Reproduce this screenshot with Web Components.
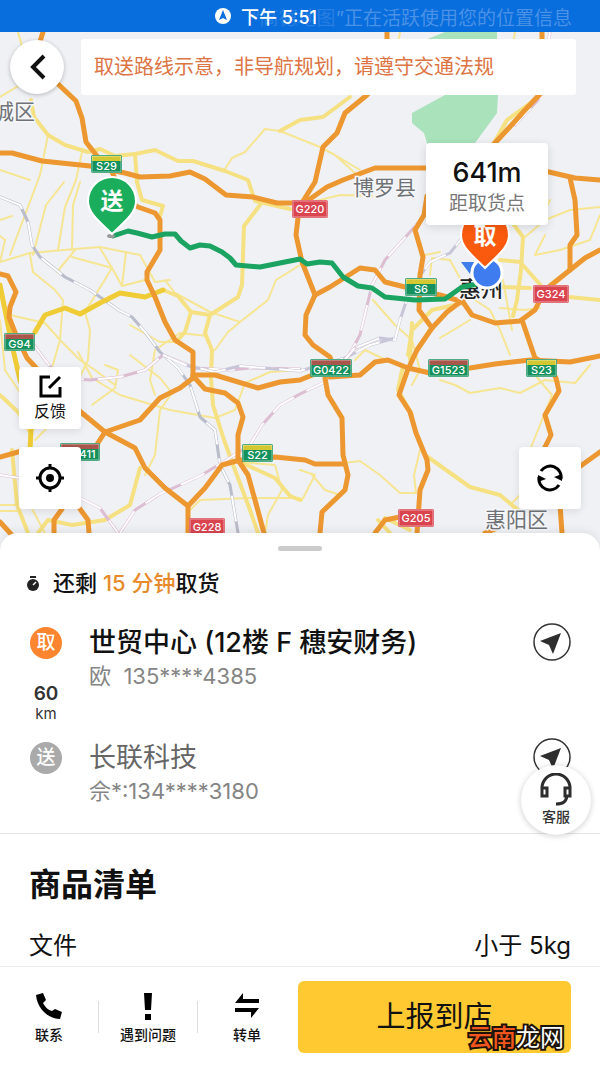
<!DOCTYPE html>
<html lang="zh-CN">
<head>
<meta charset="UTF-8">
<meta name="viewport" content="width=device-width, initial-scale=1">
<title>配送任务</title>
<style>
  html, body { margin: 0; }
  body {
    font-family: Inter, "Noto Sans CJK SC", sans-serif;
    color: #111;
    background: #fff;
  }
</style>
</head>
<body>
<delivery-app></delivery-app>

<script>
// Estilos comunes de los botones
const BUTTON_RESET = `
  * { box-sizing: border-box; }
  button {
    font: inherit;
    color: inherit;
    border: none;
    padding: 0;
    margin: 0;
    background: none;
    cursor: pointer;
  }
  svg { display: block; }
`;

const ORANGE = [
  "M58 84L76 101L82 118L86 142L97 156L112 172L124 198L138 207L155 213L160 220V250L147 272V280L155 297L165 322L175 340L193 352V378",
  "M0 153H12L42 161L90 166L125 173L140 177L170 176L190 172L205 179L226 195L253 197L277 203H300",
  "M300 206L315 182L323 147L337 133L345 113L367 95L387 70V32",
  "M303 204L327 187L343 180L375 168H425L520 165L549 172L575 178L600 180",
  "M0 274L8 276L16 292L10 307L9 317L16 335L27 358L52 385L82 413L105 432L135 448L145 468L165 488L188 506V533",
  "M193 378L180 388L160 398L140 420L105 432L92 452",
  "M193 376L205 389L225 393L238 403L243 417L238 435V460L248 475L255 500L264 533",
  "M193 375H215L258 388L280 382L300 380L320 372L330 377L360 375L375 362L388 360L408 368L430 373L470 368L495 364L530 360L570 362L600 356",
  "M188 506L205 488L222 465L240 460L275 457L305 460L315 464H343",
  "M325 378L328 395L342 418L343 455L348 475L345 490L322 512L320 533",
  "M463 300L447 312L432 328L417 350L408 369L399 395L410 412L416 433L427 460L428 470L420 490L417 533",
  "M299 209L296 235L302 262L315 295L306 315L305 335L313 345L330 357L334 368",
  "M315 295L330 287L360 268L375 270L385 282L405 287L440 295L463 302L472 315L495 323L520 321L535 310L545 290L570 270L585 258L600 250",
  "M427 196L424 215L415 230L423 257L420 275L419 310L432 328",
  "M570 178L575 200L577 235L570 245V270",
  "M522 320L535 358L548 365L556 378L559 391L545 415L551 435L542 453",
  "M600 452L575 470",
  "M560 505L562 533",
  "M375 533L385 520L400 517",
  "M485 533L500 527",
  "M0 457L25 450",
  "M0 522L11 534",
  "M62 509L54 520V533M80 509L88 520L89 533",
  "M542 32V92L525 110L507 130L493 145",
  "M43 32L38 48"
];

const GOLD = [
  "M0 285L6 315L12 345L20 380L32 410L30 450",
  "M35 332L45 315L65 308L80 314L100 303L120 293L145 297L163 290"
];

const YELLOW_WIDE = [
  "M31 100L34 117L48 135L65 145L88 152L100 149L115 156L135 154L155 150L178 161L193 161L225 171L248 180L255 201L290 209",
  "M260 205L244 226L242 285L238 297L210 315L205 333L212 350L211 378L213 405L224 440L235 470L250 510L258 533",
  "M163 290L178 296L191 312L210 315M191 312L185 332L176 342",
  "M135 154L137 182L142 200L163 206L160 216",
  "M280 131L300 120L323 117L350 97",
  "M540 95L528 105L507 120L494 143",
  "M505 213L523 237L521 270L517 300L513 316",
  "M500 260L520 262L545 290M502 287L530 288",
  "M569 297L600 300",
  "M408 355L412 330L432 310L463 303",
  "M140 468L130 505L105 520L72 525L48 520L38 533",
  "M12 450L17 505L28 533M0 395L18 412L30 432",
  "M240 462L275 478L290 496L300 500",
  "M425 455L470 487L500 495L518 510",
  "M378 520L390 533M385 518L410 530",
  "M403 366L398 390L412 415",
  "M412 323L410 360"
];

const YELLOW = [
  "M64 182L46 205L40 228L33 255M80 182L73 205L72 250M48 135L40 175L25 215L10 255",
  "M82 152L76 180L65 207L58 250",
  "M280 131L265 129L245 152L232 158L225 169M280 131L320 147",
  "M0 262L30 253L75 249L100 247L140 255L155 282L170 280",
  "M30 255L33 272L55 290L63 300L60 340L50 375",
  "M75 250L57 272M100 248L112 268L122 286L145 280M126 252L122 286M72 257L112 268M112 268L85 312L90 330L88 360L76 385",
  "M165 280L175 293L210 312L240 322L228 332L215 350M240 322L268 300L276 280L300 265",
  "M10 315L45 323L60 340L80 360L95 370L115 385",
  "M155 350L180 333L207 336M155 350L150 380L155 395",
  "M78 352L92 378L120 395L170 410L215 418L235 410L245 383L270 372L300 370",
  "M92 405L115 388L118 370L105 365M130 355L160 378L172 393L160 410L155 455L145 475",
  "M130 325L160 342L175 342",
  "M0 320L5 370L25 400M0 262L5 240L0 236",
  "M30 430L45 425M35 440L50 425",
  "M200 500L250 498L300 498M188 512L200 500",
  "M240 462L275 465L282 490L268 515L265 533",
  "M300 470L315 475L302 500M312 475L325 490L340 495",
  "M343 463L360 461L380 475L400 493H415",
  "M420 450L414 475L416 493",
  "M335 155L355 173M320 147L335 155L360 170",
  "M312 202L340 195L380 196",
  "M373 300L395 325L412 340L420 370L412 385",
  "M430 275L432 258L450 260L462 282M425 255L440 252",
  "M545 235L535 255L560 250L590 240L600 215M525 237L545 220L570 210L600 207",
  "M510 210L540 220L550 200",
  "M475 300L490 310L500 330L510 355M470 320L440 338",
  "M503 280L512 330M440 380L455 385L470 393L500 388L520 393L545 380L575 383L590 365",
  "M535 375L552 395L530 450M520 495L512 503",
  "M355 360L365 350L390 362M540 308L525 310L500 308",
  "M0 511H20M0 505H30L45 533",
  "M30 180L0 170",
  "M18 32L26 60L20 85L0 97M40 70L20 85",
  "M515 32L512 50M400 32L397 50",
  "M0 220L12 216"
];

const RAILS = [
  { tone: "#b9bcc9", d: "M0 197L20 205L28 222L32 245L40 257L65 277L90 290L120 311L132 317L145 332L160 352L178 368L190 385L200 417L215 430L220 465L230 485L238 533" },
  { tone: "#dcbdd2", d: "M34 345L45 360L60 378L90 380L120 377L145 370L163 355L195 368L230 370L250 368L300 369" },
  { tone: "#c9c5d8", d: "M163 355L185 365L215 372L240 366L300 371L345 358L370 345L395 338" },
  { tone: "#dcbdd2", d: "M343 366L360 335L372 285L385 260L410 232L425 215" },
  { tone: "#c9c5d8", d: "M355 348L380 338L395 340L400 320L410 290L430 262L450 253L462 238" },
  { tone: "#dcbdd2", d: "M120 533L135 510L160 494L200 476L225 461L250 445L262 425L280 405L300 394L325 382L355 348" },
  { tone: "#dcbdd2", d: "M78 497L100 508L118 533M0 475L20 478" },
  { tone: "#dcbdd2", d: "M550 32L538 100L515 125" }
];

const SHIELDS = [
  { text: "S29", x: 91, y: 155, w: 31, kind: "province" },
  { text: "G220", x: 292, y: 200, w: 36, kind: "national" },
  { text: "S6", x: 405, y: 278, w: 32, kind: "province" },
  { text: "G324", x: 533, y: 285, w: 36, kind: "national" },
  { text: "G94", x: 4, y: 333, w: 31, kind: "express" },
  { text: "G0422", x: 310, y: 359, w: 42, kind: "express" },
  { text: "G1523", x: 428, y: 359, w: 41, kind: "express" },
  { text: "S23", x: 526, y: 359, w: 31, kind: "province" },
  { text: "G9411", x: 60, y: 443, w: 40, kind: "express" },
  { text: "S22", x: 242, y: 444, w: 31, kind: "province" },
  { text: "G228", x: 189, y: 518, w: 36, kind: "national" },
  { text: "G205", x: 398, y: 509, w: 36, kind: "national" }
];

class StatusBar extends HTMLElement {
  constructor() {
    super();
    this.attachShadow({ mode: "open" });
  }

  connectedCallback() {
    this.shadowRoot.innerHTML = `
      <style>
        :host {
          display: grid;
          align-items: center;
          height: 32px;
          background: #086ddd;
          color: #fff;
          white-space: nowrap;
          overflow: hidden;
        }
        .notice, .time { grid-area: 1 / 1; }
        .notice {
          justify-self: end;
          padding-right: 28px;
          font-size: 19px;
          color: #4b92e6;
        }
        .fade { color: #2b7fe1; }
        .time {
          justify-self: center;
          display: flex;
          align-items: center;
          gap: 10px;
          padding-right: 68px;
          font-size: 18px;
          font-weight: 500;
        }
        svg { display: block; }
      </style>
      <span class="notice"><span class="fade">“高德地图</span>”正在活跃使用您的位置信息</span>
      <span class="time">
        <svg width="16" height="16" viewBox="0 0 16 16"><circle cx="8" cy="8" r="8" fill="#fff"/><path d="M8 2L12 12L8 10L4 12Z" fill="#086ddd"/></svg>
        <span>下午 5:51</span>
      </span>
    `;
  }
}

class RouteMap extends HTMLElement {
  constructor() {
    super();
    this.attachShadow({ mode: "open" });
  }

  lines(paths) {
    return paths.map((d) => `<path d="${d}"/>`).join("");
  }

  shield({ text, x, y, w, kind }) {
    const red = kind === "national";
    const cap = kind === "province" ? "#d3c832" : "#a9564c";
    return `
      <g>
        <rect x="${x}" y="${y}" width="${w}" height="18" rx="2" fill="${red ? "#d9444f" : "#14915c"}"/>
        ${red ? "" : `<rect x="${x + 1}" y="${y + 1}" width="${w - 2}" height="5" fill="${cap}"/>`}
        <rect x="${x + 1}" y="${y + 1}" width="${w - 2}" height="16" rx="1" fill="none" stroke="#fff" stroke-opacity=".5"/>
        <text x="${x + w / 2}" y="${red ? y + 13 : y + 15}">${text}</text>
      </g>`;
  }

  connectedCallback() {
    this.shadowRoot.innerHTML = `
      <style>
        :host { display: block; background: #f0f1f5; overflow: hidden; }
        svg { display: block; width: 100%; height: 100%; }
        .road { fill: none; stroke-linejoin: round; stroke-linecap: round; }
        .shields { font-size: 11px; font-weight: 500; fill: #fff; text-anchor: middle; }
        .places {
          font-size: 21px;
          fill: #6f7276;
          stroke: #f6f7f9;
          stroke-width: 3px;
          paint-order: stroke;
        }
        .city { fill: #222; font-size: 22px; font-weight: 500; }
        .pin { font-size: 23px; font-weight: 700; fill: #fff; text-anchor: middle; }
      </style>
      <svg viewBox="0 32 600 520" preserveAspectRatio="xMidYMin slice" role="img" aria-label="取送路线">
        <path d="M412 113L445 95L425 40L445 32H497L498 95L497 113L475 143L465 155H432L427 143L424 133L412 123Z" fill="#a9e2bb"/>
        <g class="road" stroke="#f6e592" stroke-width="2">${this.lines(YELLOW)}</g>
        <g class="road" stroke="#f5e181" stroke-width="4">${this.lines(YELLOW_WIDE)}</g>
        ${RAILS.map((rail) => `
          <path class="road" d="${rail.d}" stroke="${rail.tone}" stroke-width="3"/>
          <path d="${rail.d}" fill="none" stroke="#fff" stroke-width="2" stroke-dasharray="26 14"/>`).join("")}
        <g class="road" stroke="#efcc36" stroke-width="5">${this.lines(GOLD)}</g>
        <g class="road" stroke="#ec9730" stroke-width="5">${this.lines(ORANGE)}</g>
        <g class="shields">${SHIELDS.map((item) => this.shield(item)).join("")}</g>
        <g class="places">
          <text x="-7" y="119">城区</text>
          <text x="353" y="195">博罗县</text>
          <text x="485" y="527">惠阳区</text>
          <text class="city" x="459" y="297">惠州</text>
        </g>
        <path class="road" stroke="#1ba362" stroke-width="5" d="M113 236L128 231L137 233L152 237L165 234H175L181 241L190 248L200 245L210 246L222 252L230 258L236 265L260 267L285 262L300 259L307 264L320 262L332 263L343 277L358 286L372 288L385 297L415 300L445 299L462 287L478 284"/>
        <ellipse cx="111" cy="236" rx="4" ry="2" fill="#999"/>
        <path d="M112 234C104 225 88 215 88 201A24 24 0 0 1 136 201C136 215 120 225 112 234Z" fill="#19ad5c" stroke="#fff" stroke-width="2"/>
        <text class="pin" x="112" y="209">送</text>
        <path d="M461 262L474 262L470 274Z" fill="#3f7eea"/>
        <circle cx="487" cy="273" r="15" fill="#3e7cf0" stroke="#fff" stroke-width="3"/>
        <path d="M485 268C477 259 461 249 461 235A24 24 0 0 1 509 235C509 249 493 259 485 268Z" fill="#fa5a0e" stroke="#fff" stroke-width="2"/>
        <text class="pin" x="485" y="244">取</text>
      </svg>
    `;
  }
}

// Cuadro blanco con un icono, encima del mapa
class MapTool extends HTMLElement {
  constructor() {
    super();
    this.attachShadow({ mode: "open" });
  }

  connectedCallback() {
    this.shadowRoot.innerHTML = `
      <style>
        ${BUTTON_RESET}
        :host { display: block; pointer-events: auto; }
        button {
          display: flex;
          flex-direction: column;
          align-items: center;
          justify-content: center;
          gap: 2px;
          width: 62px;
          height: 62px;
          border-radius: 4px;
          background: #fff;
          box-shadow: 0 2px 8px rgba(0, 0, 0, .1);
          font-size: 16px;
          line-height: 22px;
        }
      </style>
      <button type="button" aria-label="${this.getAttribute("label")}"><slot></slot></button>
    `;
  }
}

class MapPanel extends HTMLElement {
  constructor() {
    super();
    this.attachShadow({ mode: "open" });
  }

  connectedCallback() {
    this.shadowRoot.innerHTML = `
      <style>
        ${BUTTON_RESET}
        :host { display: grid; height: 520px; position: relative; }
        route-map, .overlay { grid-area: 1 / 1; min-width: 0; min-height: 0; }
        .overlay {
          z-index: 1;
          display: flex;
          flex-direction: column;
          justify-content: space-between;
          padding: 7px 0 43px;
          pointer-events: none;
        }
        .top {
          display: flex;
          align-items: center;
          gap: 17px;
          padding: 0 24px 0 10px;
        }
        .back {
          flex: none;
          display: grid;
          place-items: center;
          width: 54px;
          height: 54px;
          border-radius: 50%;
          background: #fff;
          box-shadow: 0 1px 4px rgba(0, 0, 0, .25);
          pointer-events: auto;
        }
        .banner {
          flex: 1;
          margin: 0;
          padding: 0 13px;
          border-radius: 3px;
          background: #fff;
          color: #dc7443;
          font-size: 20px;
          line-height: 56px;
          white-space: nowrap;
        }
        .tools {
          display: flex;
          justify-content: space-between;
          align-items: flex-end;
          padding: 0 19px;
        }
        .column { display: grid; gap: 18px; }
        .distance {
          position: absolute;
          z-index: 1;
          top: 111px;
          left: 71%;
          width: 122px;
          padding: 13px 0 7px;
          border-radius: 4px;
          background: #fff;
          box-shadow: 0 2px 10px rgba(0, 0, 0, .12);
          text-align: center;
        }
        .distance strong {
          display: block;
          font-size: 27px;
          font-weight: 500;
          line-height: 34px;
        }
        .distance span {
          display: block;
          font-size: 19px;
          line-height: 28px;
          color: #777;
        }
      </style>
      <route-map></route-map>
      <div class="distance"><strong>641m</strong><span>距取货点</span></div>
      <div class="overlay">
        <div class="top">
          <button class="back" type="button" aria-label="返回">
            <svg width="24" height="28" viewBox="0 0 24 28" fill="none" stroke="#111" stroke-width="4"><path d="M19 3L8 14L19 25"/></svg>
          </button>
          <p class="banner">取送路线示意，非导航规划，请遵守交通法规</p>
        </div>
        <div class="tools">
          <div class="column">
            <map-tool label="反馈">
              <svg width="24" height="24" viewBox="0 0 24 24" fill="none" stroke="#000" stroke-width="3"><path d="M12 3H3V22H22V13M11 14L22 3"/></svg>
              反馈
            </map-tool>
            <map-tool label="定位">
              <svg width="30" height="30" viewBox="0 0 30 30" fill="none" stroke="#000" stroke-width="3"><circle cx="15" cy="15" r="10"/><path d="M15 1V6M15 24V29M1 15H6M24 15H29"/><circle cx="15" cy="15" r="4" fill="#000" stroke="none"/></svg>
            </map-tool>
          </div>
          <map-tool label="刷新">
            <svg width="28" height="28" viewBox="0 0 28 28" fill="none" stroke="#000" stroke-width="3"><path d="M5 7A11 11 0 0 1 25 15M23 21A11 11 0 0 1 3 13"/><path d="M18 13L26 10V17ZM10 15L2 18V11Z" fill="#000" stroke="none"/></svg>
          </map-tool>
        </div>
      </div>
    `;
  }
}

class RouteStop extends HTMLElement {
  constructor() {
    super();
    this.attachShadow({ mode: "open" });
  }

  connectedCallback() {
    this.shadowRoot.innerHTML = `
      <style>
        ${BUTTON_RESET}
        :host {
          --badge: #fd8530;
          --title: #111;
          --weight: 500;
          display: grid;
          grid-template-columns: 32px 1fr 38px;
          column-gap: 27px;
          align-items: start;
        }
        :host([kind="drop"]) { --badge: #aaa; --title: #666; --weight: 400; }
        .side {
          display: flex;
          flex-direction: column;
          align-items: center;
          padding-top: 2px;
        }
        .badge {
          width: 32px;
          height: 32px;
          margin-bottom: 24px;
          border-radius: 50%;
          background: var(--badge);
          color: #fff;
          font-size: 19px;
          font-weight: 500;
          line-height: 32px;
          text-align: center;
        }
        :host([kind="drop"]) .badge { margin-bottom: 0; }
        h2, p { margin: 0; white-space: nowrap; }
        h2 {
          font-size: 27px;
          font-weight: var(--weight);
          line-height: 36px;
          color: var(--title);
        }
        p { font-size: 22px; line-height: 30px; color: #858585; white-space: pre; }
        button { margin-top: -2px; }
      </style>
      <div class="side">
        <span class="badge">${this.getAttribute("badge")}</span>
        <slot></slot>
      </div>
      <div>
        <h2>${this.getAttribute("name")}</h2>
        <p>${this.getAttribute("contact")}</p>
      </div>
      <button type="button" aria-label="导航">
        <svg width="38" height="38" viewBox="0 0 38 38"><circle cx="19" cy="19" r="18" fill="#fff" stroke="#333" stroke-width="1.5"/><path d="M28 10L20 31L16 22L7 18Z" fill="#2d2d2d"/></svg>
      </button>
    `;
  }
}

class OrderSheet extends HTMLElement {
  constructor() {
    super();
    this.attachShadow({ mode: "open" });
  }

  connectedCallback() {
    this.shadowRoot.innerHTML = `
      <style>
        ${BUTTON_RESET}
        :host {
          display: block;
          position: relative;
          z-index: 2;
          flex: 1;
          margin-top: -19px;
          padding-top: 13px;
          border-radius: 18px 18px 0 0;
          background: #fff;
          box-shadow: 0 -2px 8px rgba(0, 0, 0, .08);
        }
        .handle {
          width: 44px;
          height: 5px;
          margin: 0 auto 16px;
          border-radius: 3px;
          background: #ccc;
        }
        .timer {
          display: flex;
          align-items: center;
          gap: 14px;
          margin: 0 0 26px;
          padding: 0 27px;
          font-size: 22px;
          font-weight: 500;
          line-height: 32px;
        }
        .timer b { font-weight: 500; color: #e78a2c; }
        .stops {
          position: relative;
          display: grid;
          gap: 17px;
          padding: 0 29px 27px 30px;
          border-bottom: 1px solid #e6e6e6;
        }
        .km { font-size: 19px; font-weight: 600; line-height: 22px; color: #333; }
        .unit { font-size: 15px; line-height: 18px; color: #333; }
        .service {
          position: absolute;
          right: 9px;
          bottom: -2px;
          display: flex;
          flex-direction: column;
          align-items: center;
          justify-content: center;
          width: 70px;
          height: 70px;
          border-radius: 50%;
          background: #fff;
          box-shadow: 0 1px 6px rgba(0, 0, 0, .2);
          font-size: 14px;
          font-weight: 500;
          line-height: 20px;
          color: #333;
        }
        .goods { padding: 31px 29px 2px; }
        h1 { margin: 0 0 25px; font-size: 32px; font-weight: 700; line-height: 40px; }
        dl {
          display: flex;
          justify-content: space-between;
          margin: 0;
          font-size: 24px;
          line-height: 32px;
        }
        dd { margin: 0; }
      </style>
      <div class="handle"></div>
      <p class="timer">
        <svg width="12" height="16" viewBox="0 0 12 16"><circle cx="6" cy="10" r="6" fill="#222"/><path d="M3 1H9V3H3Z" fill="#222"/><path d="M6 10L9 7" stroke="#fff" stroke-width="1.5"/></svg>
        <span>还剩 <b>15 分钟</b>取货</span>
      </p>
      <section class="stops">
        <route-stop badge="取" name="世贸中心 (12楼 F 穗安财务)" contact="欧  135****4385">
          <span class="km">60</span>
          <span class="unit">km</span>
        </route-stop>
        <route-stop kind="drop" badge="送" name="长联科技" contact="佘*:134****3180"></route-stop>
        <button class="service" type="button">
          <svg width="34" height="34" viewBox="0 0 34 34" fill="none" stroke="#2d2d2d" stroke-width="3"><path d="M3 16V15A14 14 0 0 1 31 15V16M3 15V23H8V15ZM26 15H31V23H26ZM28 23C27 29 24 31 17 31"/></svg>
          客服
        </button>
      </section>
      <section class="goods">
        <h1>商品清单</h1>
        <dl><dt>文件</dt><dd>小于 5kg</dd></dl>
      </section>
    `;
  }
}

class ActionBar extends HTMLElement {
  constructor() {
    super();
    this.attachShadow({ mode: "open" });
  }

  connectedCallback() {
    this.shadowRoot.innerHTML = `
      <style>
        ${BUTTON_RESET}
        :host {
          display: flex;
          position: relative;
          z-index: 3;
          padding: 14px 29px 14px 0;
          border-top: 1px solid #ececec;
          background: #fff;
        }
        .action {
          flex: none;
          display: flex;
          flex-direction: column;
          align-items: center;
          gap: 4px;
          width: 98px;
          padding-top: 10px;
          font-size: 14px;
          font-weight: 500;
          line-height: 20px;
        }
        .line { align-self: center; width: 1px; height: 32px; background: #ddd; }
        .submit {
          flex: 1;
          height: 72px;
          margin-left: 2px;
          border-radius: 6px;
          background: #ffc931;
          font-size: 29px;
          line-height: 72px;
        }
        .mark {
          position: absolute;
          right: 36px;
          bottom: 14px;
          color: #fff;
          font-size: 24px;
          line-height: 30px;
          -webkit-text-stroke: 4px #1d1208;
          paint-order: stroke fill;
          pointer-events: none;
        }
        .mark b { font-weight: 500; color: #f0561d; }
      </style>
      <button class="action" type="button">
        <svg width="30" height="30" viewBox="0 0 30 30"><path d="M2 4L9 2L12 9L9 12C11 16 14 19 18 20L21 18L28 21L26 28C14 28 3 17 2 4Z"/></svg>
        联系
      </button>
      <span class="line"></span>
      <button class="action" type="button">
        <svg width="30" height="30" viewBox="0 0 30 30"><path d="M11 2H19L18 19H12ZM12 23H18V29H12Z"/></svg>
        遇到问题
      </button>
      <span class="line"></span>
      <button class="action" type="button">
        <svg width="30" height="30" viewBox="0 0 30 30"><path d="M3 12L11 2V8H27V12ZM27 17L19 27V21H3V17Z"/></svg>
        转单
      </button>
      <button class="submit" type="button">上报到店</button>
      <span class="mark"><b>云南</b>龙网</span>
    `;
  }
}

class DeliveryApp extends HTMLElement {
  constructor() {
    super();
    this.attachShadow({ mode: "open" });
  }

  connectedCallback() {
    this.shadowRoot.innerHTML = `
      <style>
        :host { display: flex; flex-direction: column; min-height: 100vh; }
      </style>
      <status-bar></status-bar>
      <map-panel></map-panel>
      <order-sheet></order-sheet>
      <action-bar></action-bar>
    `;
  }
}

customElements.define("status-bar", StatusBar);
customElements.define("route-map", RouteMap);
customElements.define("map-tool", MapTool);
customElements.define("map-panel", MapPanel);
customElements.define("route-stop", RouteStop);
customElements.define("order-sheet", OrderSheet);
customElements.define("action-bar", ActionBar);
customElements.define("delivery-app", DeliveryApp);
</script>
</body>
</html>
